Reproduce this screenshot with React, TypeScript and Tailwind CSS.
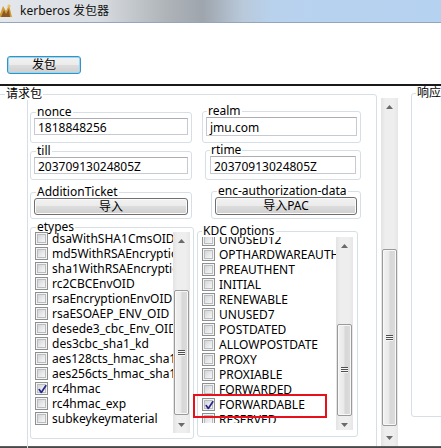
import React from "react";

const etypes = [
  "dsaWithSHA1CmsOID",
  "md5WithRSAEncryption",
  "sha1WithRSAEncryption",
  "rc2CBCEnvOID",
  "rsaEncryptionEnvOID",
  "rsaESOAEP_ENV_OID",
  "desede3_cbc_Env_OID",
  "des3cbc_sha1_kd",
  "aes128cts_hmac_sha1_96",
  "aes256cts_hmac_sha1_96",
  "rc4hmac",
  "rc4hmac_exp",
  "subkeykeymaterial",
];

const kdc = [
  "UNUSED12",
  "OPTHARDWAREAUTH",
  "PREAUTHENT",
  "INITIAL",
  "RENEWABLE",
  "UNUSED7",
  "POSTDATED",
  "ALLOWPOSTDATE",
  "PROXY",
  "PROXIABLE",
  "FORWARDED",
  "FORWARDABLE",
  "RESERVED",
];

function CheckBox({ checked }: { checked?: boolean }) {
  return (
    <span className="relative flex h-[13px] w-[13px] shrink-0 border border-[#8e8f8f] bg-[#f4f4f4] p-[1px]">
      <span className="flex-1 border border-[#b9bdc2] bg-[linear-gradient(135deg,#d2d4d6_0%,#e6e7e8_50%,#f7f7f7_100%)]" />
      {checked && (
        <svg className="absolute left-[1px] top-[1px]" width="11" height="11" viewBox="0 0 11 11">
          <path d="M2.2 5.6 L4.3 8.4 L8.8 1.8" fill="none" stroke="#25258c" strokeWidth="1.7" strokeLinecap="round" strokeLinejoin="round" />
        </svg>
      )}
    </span>
  );
}

function Row({ label, checked }: { label: string; checked?: boolean }) {
  return (
    <div className="flex h-[15px] items-center gap-[4px] pl-[4px] whitespace-nowrap leading-[15px]">
      <CheckBox checked={checked} />
      <span>{label}</span>
    </div>
  );
}

function Grip() {
  return (
    <div className="flex flex-col">
      <span className="h-[1px] w-[7px] bg-[#4f4f4f]" />
      <span className="h-[1px] w-[7px] bg-[#f6f6f6]" />
      <span className="h-[1px] w-[7px] bg-[#4f4f4f]" />
      <span className="h-[1px] w-[7px] bg-[#f6f6f6]" />
      <span className="h-[1px] w-[7px] bg-[#4f4f4f]" />
      <span className="h-[1px] w-[7px] bg-[#f6f6f6]" />
    </div>
  );
}

function VScroll({ box, thumb }: { box: string; thumb: string }) {
  return (
    <div className={`flex w-[17px] shrink-0 flex-col bg-[linear-gradient(to_right,#e3e3e3_0%,#eeeeee_25%,#eeeeee_75%,#e6e6e6_100%)] ${box}`}>
      <div className="flex h-[17px] shrink-0 items-center justify-center">
        <svg width="7" height="4" viewBox="0 0 7 4">
          <polygon points="0,4 3.5,0 7,4" fill="#6a6a6a" />
        </svg>
      </div>
      <div className="flex-1 px-[1px]">
        <div
          className={`flex items-center justify-center rounded-[2px] border border-[#9a9a9a] bg-[linear-gradient(to_right,#f2f2f2_0%,#e9e9e9_45%,#d7d7d7_55%,#dcdcdc_100%)] shadow-[inset_0_0_0_1px_#f8f8f8] ${thumb}`}
        >
          <Grip />
        </div>
      </div>
      <div className="flex h-[17px] shrink-0 items-center justify-center">
        <svg width="7" height="4" viewBox="0 0 7 4">
          <polygon points="0,0 7,0 3.5,4" fill="#6a6a6a" />
        </svg>
      </div>
    </div>
  );
}

function TextBox({ value, cls }: { value: string; cls: string }) {
  return (
    <div className={`border border-[#c6cad1] border-t-[#abadb3] bg-white pl-[3px] leading-[12px] whitespace-nowrap ${cls}`}>
      {value}
    </div>
  );
}

const btn =
  "flex items-center justify-center rounded-[3px] border border-[#707070] bg-[linear-gradient(to_bottom,#f2f2f2_0%,#ebebeb_50%,#dddddd_50%,#cfcfcf_100%)] shadow-[inset_0_0_0_1px_#fbfbfb] leading-[12px]";

export default function App() {
  return (
    <div className="flex h-[448px] w-[441px] flex-col overflow-hidden bg-white text-[12px] text-black font-['Noto_Sans','Noto_Sans_CJK_SC',sans-serif]">
      {/* Title bar */}
      <div className="flex h-[23px] shrink-0 items-center border-b border-[#93a6ba] bg-[linear-gradient(to_right,#e4e7eb_0%,#d9dde1_22%,#aeb3b8_38%,#9ea5ad_46%,#b9c9da_55%,#b8d2ee_62%,#b5d2f0_100%)]">
        <svg className="ml-[-3px]" width="18" height="18" viewBox="0 0 18 18">
          <path d="M2 15 L6 4 L9 9 L12 3 L15 15 Z" fill="#d39a3a" />
          <path d="M4 15 L7 8 L9 12 L12 7 L13 15 Z" fill="#8a5a20" />
          <circle cx="12" cy="4" r="1.6" fill="#e8c060" />
        </svg>
        <span className="ml-[5px] leading-[14px] text-[#111]">kerberos 发包器</span>
      </div>

      {/* Top area */}
      <div className="h-[61px] shrink-0 pl-[7px] pt-[33px]">
        <div className="flex h-[18px] w-[74px] items-center justify-center rounded-[3px] border border-[#3c8fc4] bg-[linear-gradient(to_bottom,#f2f2f2_0%,#ebebeb_50%,#dddddd_50%,#cfcfcf_100%)] shadow-[inset_0_0_0_1px_#8fdcf5] leading-[12px]">
          发包
        </div>
      </div>
      <div className="h-[2px] shrink-0 bg-[#1a1a1a]" />

      {/* Bottom area */}
      <div className="flex h-[360px] shrink-0">
        {/* 请求包 */}
        <div className="w-[381px] shrink-0">
          <fieldset className="-ml-[3px] mt-[2px] h-[370px] w-[380px] min-w-0 rounded-[3px] border border-[#d5dfe5]">
            <legend className="ml-[7px] px-[1px] leading-[12px]">请求包</legend>
            <div className="relative ml-[29px] flex h-[360px] w-[348px] flex-col border-l border-[#d5dfe5]">
              {/* Row 1 */}
              <div className="mt-[5px] flex items-start">
                <fieldset className="ml-[2px] mt-[1px] w-[162px] min-w-0 rounded-[3px] border border-[#d5dfe5] pb-[7px]">
                  <legend className="ml-[5px] px-[1px] leading-[12px]">nonce</legend>
                  <TextBox value="1818848256" cls="mx-[3px] h-[17px] pt-[3px]" />
                </fieldset>
                <fieldset className="ml-[10px] w-[159px] min-w-0 rounded-[3px] border border-[#d5dfe5] pb-[6px]">
                  <legend className="ml-[4px] px-[1px] leading-[12px]">realm</legend>
                  <TextBox value="jmu.com" cls="mx-[3px] h-[19px] pt-[4px]" />
                </fieldset>
              </div>
              {/* Row 2 */}
              <div className="mt-[2px] flex items-start">
                <fieldset className="ml-[2px] w-[162px] min-w-0 rounded-[3px] border border-[#d5dfe5] pb-[5px]">
                  <legend className="ml-[5px] px-[1px] leading-[12px]">till</legend>
                  <TextBox value="20370913024805Z" cls="mx-[3px] h-[17px] pt-[3px]" />
                </fieldset>
                <fieldset className="ml-[13px] -mt-[1px] w-[156px] min-w-0 rounded-[3px] border border-[#d5dfe5] pb-[5px]">
                  <legend className="ml-[4px] px-[1px] leading-[12px]">rtime</legend>
                  <TextBox value="20370913024805Z" cls="mx-[4px] h-[18px] pt-[4px]" />
                </fieldset>
              </div>
              {/* Row 3 */}
              <div className="mt-[6px] flex items-start">
                <fieldset className="ml-[2px] w-[162px] min-w-0 rounded-[3px] border border-[#d5dfe5] pb-[3px]">
                  <legend className="ml-[5px] px-[1px] leading-[12px]">AdditionTicket</legend>
                  <div className={`${btn} mx-[3px] h-[17px]`}>导入</div>
                </fieldset>
                <fieldset className="ml-[19px] -mt-[1px] w-[150px] min-w-0 rounded-[3px] border border-[#d5dfe5] pb-[3px]">
                  <legend className="ml-[5px] px-[1px] leading-[12px]">enc-authorization-data</legend>
                  <div className={`${btn} mx-[3px] h-[18px]`}>导入PAC</div>
                </fieldset>
              </div>
              {/* Row 4 */}
              <div className="mt-[2px] flex items-start">
                <fieldset className="ml-[2px] w-[164px] min-w-0 rounded-[3px] border border-[#d5dfe5] pb-[5px]">
                  <legend className="ml-[5px] px-[1px] leading-[12px]">etypes</legend>
                  <div className="-mt-[2px] flex items-start">
                    <div className="h-[200px] w-[142px] overflow-hidden">
                      {etypes.map((t) => (
                        <Row key={t} label={t} checked={t === "rc4hmac"} />
                      ))}
                    </div>
                    <VScroll box="mt-[1px] h-[201px]" thumb="mt-[41px] h-[125px]" />
                  </div>
                </fieldset>
                <fieldset className="ml-[3px] mt-[4px] w-[161px] min-w-0 rounded-[3px] border border-[#d5dfe5] pb-[6px]">
                  <legend className="ml-[4px] px-[1px] leading-[12px]">KDC Options</legend>
                  <div className="flex items-start">
                    <div className="h-[186px] w-[138px] overflow-hidden">
                      <div className="-mt-[5px]">
                        {kdc.map((t) => (
                          <Row key={t} label={t} checked={t === "FORWARDABLE"} />
                        ))}
                      </div>
                    </div>
                    <VScroll box="h-[193px]" thumb="mt-[70px] h-[92px]" />
                  </div>
                </fieldset>
              </div>
              {/* highlight box */}
              <div className="absolute left-[165px] top-[294px] h-[24px] w-[134px] border-2 border-[#e8101a]" />
            </div>
          </fieldset>
        </div>

        {/* outer scrollbar */}
        <VScroll box="mt-[12px] h-[348px]" thumb="mt-[134px] h-[177px]" />

        {/* 响应 */}
        <fieldset className="ml-[13px] mt-[1px] h-[330px] w-[40px] min-w-0 shrink-0 rounded-[3px] border border-[#d5dfe5]">
          <legend className="ml-[4px] px-[1px] leading-[12px] whitespace-nowrap">响应</legend>
        </fieldset>
      </div>

      <div className="h-[2px] shrink-0 bg-[linear-gradient(to_bottom,#6a6a6a,#3e3e3e)]" />
    </div>
  );
}
